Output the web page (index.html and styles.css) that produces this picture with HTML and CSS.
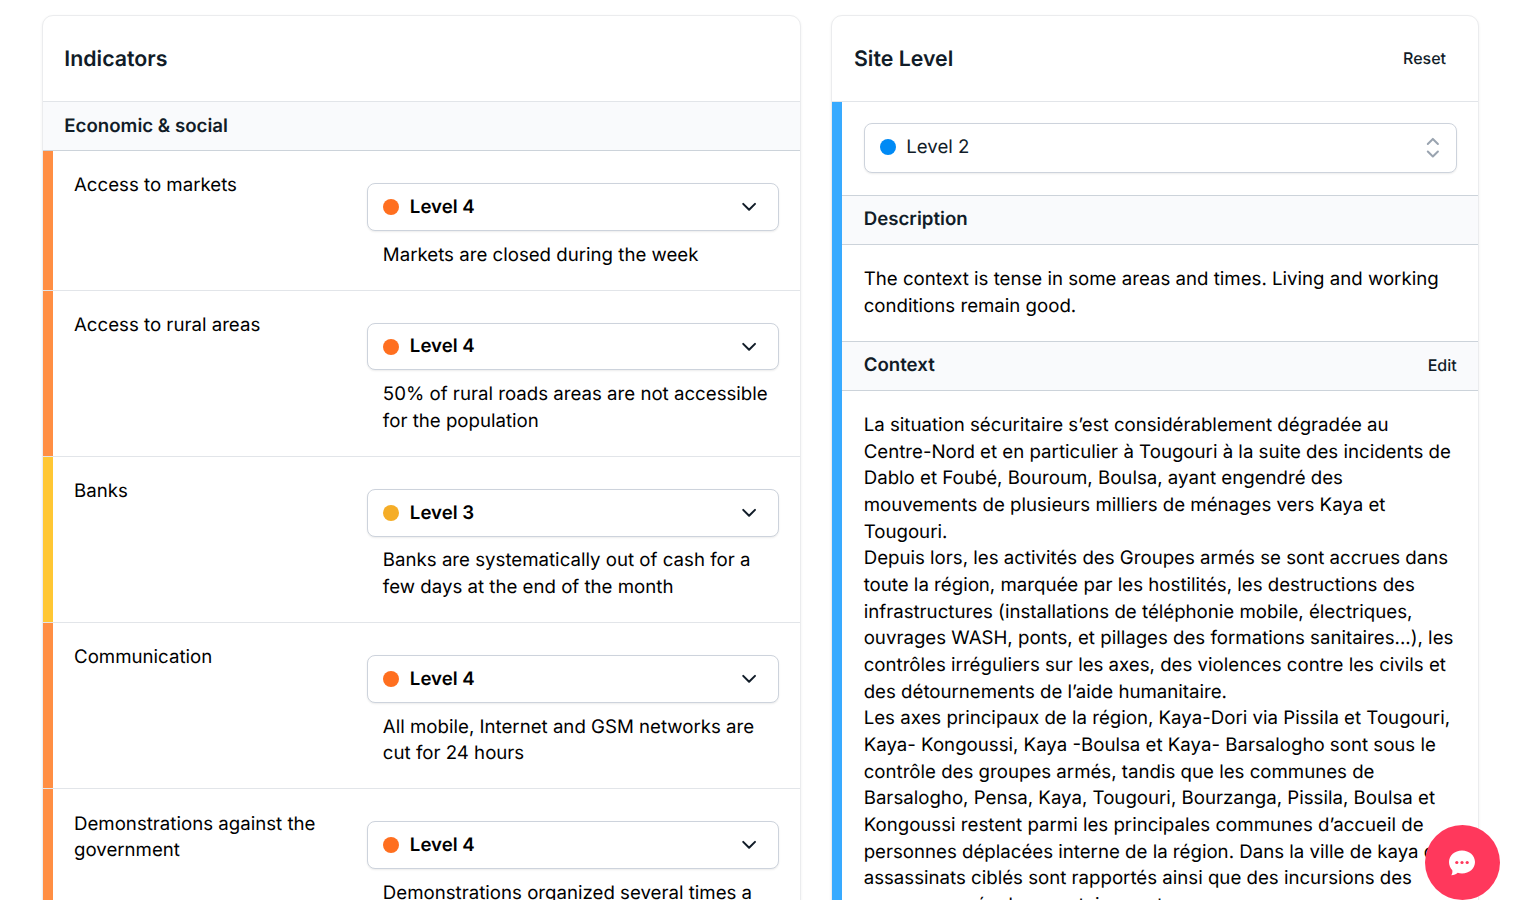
FILE: index.html
```html
<!DOCTYPE html>
<html lang="en">
<head>
<meta charset="utf-8">
<title>Indicators</title>
<link rel="stylesheet" href="styles.css">
</head>
<body>
<svg class="defs" width="0" height="0"><symbol id="chevron" viewBox="0 0 22 22"><path fill="none" stroke="currentColor" stroke-width="2" stroke-linecap="round" stroke-linejoin="round" d="M5.200 7.900l5.900 5.900 5.900-5.900"/></symbol></svg>
<main class="page">
  <section class="card card-left">
    <header class="card-header"><h1>Indicators</h1></header>
    <h2 class="section first">Economic &amp; social</h2>
    <div class="row orange">
      <div class="name">Access to markets</div>
      <div class="value">
        <button class="select"><span class="dot"></span><b>Level 4</b><svg class="chev"><use href="#chevron"/></svg></button>
        <p>Markets are closed during the week</p>
      </div>
    </div>
    <div class="row orange">
      <div class="name">Access to rural areas</div>
      <div class="value">
        <button class="select"><span class="dot"></span><b>Level 4</b><svg class="chev"><use href="#chevron"/></svg></button>
        <p>50% of rural roads areas are not accessible<br>for the population</p>
      </div>
    </div>
    <div class="row yellow">
      <div class="name">Banks</div>
      <div class="value">
        <button class="select"><span class="dot"></span><b>Level 3</b><svg class="chev"><use href="#chevron"/></svg></button>
        <p>Banks are systematically out of cash for a<br>few days at the end of the month</p>
      </div>
    </div>
    <div class="row orange">
      <div class="name">Communication</div>
      <div class="value">
        <button class="select"><span class="dot"></span><b>Level 4</b><svg class="chev"><use href="#chevron"/></svg></button>
        <p>All mobile, Internet and GSM networks are<br>cut for 24 hours</p>
      </div>
    </div>
    <div class="row orange">
      <div class="name">Demonstrations against the<br>government</div>
      <div class="value">
        <button class="select"><span class="dot"></span><b>Level 4</b><svg class="chev"><use href="#chevron"/></svg></button>
        <p>Demonstrations organized several times a</p>
      </div>
    </div>
  </section>
  <section class="card card-right">
    <header class="card-header"><h1>Site Level</h1><button class="link reset">Reset</button></header>
    <div class="site">
      <div class="picker">
        <button class="select big"><span class="dot"></span><span>Level 2</span><svg class="updown" viewBox="0 0 20 20"><path fill="none" stroke="currentColor" stroke-width="1.500" stroke-linecap="round" stroke-linejoin="round" d="M6.600 7.500l3.800-3.800 3.800 3.800m0 5.600l-3.800 3.800-3.800-3.800"/></svg></button>
      </div>
      <h2 class="section">Description</h2>
      <p class="text">The context is tense in some areas and times. Living and working<br>conditions remain good.</p>
      <h2 class="section">Context<button class="link">Edit</button></h2>
      <p class="text long">La situation sécuritaire s’est considérablement dégradée au<br>Centre-Nord et en particulier à Tougouri à la suite des incidents de<br>Dablo et Foubé, Bouroum, Boulsa, ayant engendré des<br>mouvements de plusieurs milliers de ménages vers Kaya et<br>Tougouri.<br>Depuis lors, les activités des Groupes armés se sont accrues dans<br>toute la région, marquée par les hostilités, les destructions des<br>infrastructures (installations de téléphonie mobile, électriques,<br>ouvrages WASH, ponts, et pillages des formations sanitaires...), les<br>contrôles irréguliers sur les axes, des violences contre les civils et<br>des détournements de l’aide humanitaire.<br>Les axes principaux de la région, Kaya-Dori via Pissila et Tougouri,<br>Kaya- Kongoussi, Kaya -Boulsa et Kaya- Barsalogho sont sous le<br>contrôle des groupes armés, tandis que les communes de<br>Barsalogho, Pensa, Kaya, Tougouri, Bourzanga, Pissila, Boulsa et<br>Kongoussi restent parmi les principales communes d’accueil de<br>personnes déplacées interne de la région. Dans la ville de kaya des<br>assassinats ciblés sont rapportés ainsi que des incursions des<br>groupes armés dans certains secteurs.</p>
    </div>
  </section>
</main>
<button class="chat" aria-label="Chat"><svg width="28" height="29" viewBox="0 0 28 29"><g transform="translate(0 1)"><path fill="#fff" d="M14 1.500C21.300 1.500 27 6.500 27 13S21.300 24.500 14 24.500C12.500 24.500 11 24.200 9.700 23.800C8.200 25.300 6 26.200 3.200 26.200C4.200 25 4.600 23.500 4.300 21.300C2.300 19 1 16 1 13C1 6.500 6.700 1.500 14 1.500Z"/><g fill="#ff385c"><circle cx="8.800" cy="13.500" r="1.600"/><circle cx="14" cy="13.500" r="1.600"/><circle cx="19.200" cy="13.500" r="1.600"/></g></g></svg></button>
</body>
</html>
```
FILE: styles.css
```css
* { box-sizing: border-box; margin: 0; padding: 0; }
body { height: 900px; overflow: hidden; background: #fff; color: #000; font: 400 18.667px/26.667px Inter, sans-serif; letter-spacing: 0; text-rendering: geometricPrecision; }
button { font: inherit; letter-spacing: inherit; color: inherit; background: none; border: 0; text-align: left; text-rendering: inherit; }
.defs { display: block; height: 0; }
.page { display: flex; align-items: flex-start; gap: 30px; height: 900px; overflow: hidden; padding: 15px 40px 0 42px; }
.card { height: 1000px; background: #fff; border: 1px solid #ebecee; border-radius: 11px; box-shadow: 0 1px 3px rgba(0,0,0,.06); overflow: hidden; flex: none; }
.card-left { width: 759px; }
.card-right { width: 648px; }
.card-header { height: 86px; display: flex; align-items: center; justify-content: space-between; padding: 0 21.33px; border-bottom: 1px solid #e2e5e9; }
h1 { font-size: 21.333px; line-height: 32px; font-weight: 600; color: #111c28; padding-top: 1px; }
.card-right h1 { padding-left: .6px; }
.link { font-size: 16px; line-height: 21.333px; font-weight: 500; color: #111c28; }
.reset { margin-right: 10.67px; }
.section { display: flex; justify-content: space-between; align-items: center; height: 50px; padding: 0 21.33px; font-size: 18.667px; line-height: 26.667px; font-weight: 600; color: #111c28; background: #f9fafc; border-top: 1px solid #ccd3da; border-bottom: 1px solid #ccd3da; }
.section.first { height: 49px; border-top: 0; }
.row { display: flex; justify-content: space-between; position: relative; border-bottom: 1px solid #e2e5e9; padding: 20.7px 21.33px 21.23px 31px; }
.row::before { content: ""; position: absolute; left: 0; top: 0; bottom: 0; width: 10px; background: var(--bar); }
.orange { --bar: #ff8e43; --dot: #ff6f1f; }
.yellow { --bar: #ffc734; --dot: #f5ad27; }
.name { padding-top: .7px; }
.value { width: 411.5px; padding-top: 11.3px; }
.value p { padding: 10.77px 0 0 15.7px; }
.select { display: flex; align-items: center; width: 100%; height: 47.93px; padding: 0 18px 0 15px; border: 1px solid #cdd3dc; border-radius: 8px; box-shadow: 0 1px 2px rgba(0,0,0,.08); background: #fff; }
.select b { font-weight: 600; padding-top: .4px; }
.dot { width: 16px; height: 16px; border-radius: 50%; background: var(--dot); margin-right: 10.67px; flex: none; }
.chev { width: 22px; height: 22px; margin-left: auto; color: #111c28; }
.site { --dot: #008af5; border-left: 10px solid #38aaff; }
.picker { height: 93px; padding: 21px 21.33px 0 22px; }
.big { height: 50px; padding: 0 9.7px 1.4px 15px; color: #111c28; }
.big .dot { margin-right: 10.3px; }
.updown { width: 26.67px; height: 26.67px; margin-left: auto; margin-top: 1px; color: #9aa4b0; }
.site .section { padding-left: 21.7px; padding-bottom: 1px; }
.section .link { padding-top: 1px; }
.text { padding: 21.33px 0 21.33px 21.7px; white-space: nowrap; }
.long { padding-top: 20.9px; }
.chat { position: fixed; left: 1425px; top: 825px; width: 75px; height: 75px; border-radius: 50%; background: #ff385c; display: flex; align-items: center; justify-content: center; padding: 0 1px 0 0; }
```
